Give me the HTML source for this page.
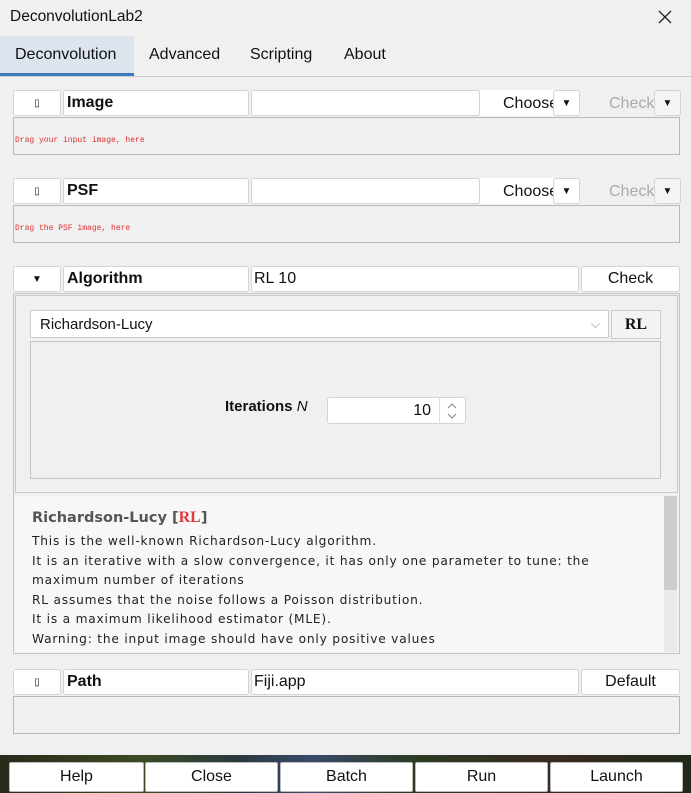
<!DOCTYPE html>
<html><head><style>
body{margin:0;width:691px;height:793px;background:#f0f0f0;font-family:"Liberation Sans",sans-serif;position:relative;overflow:hidden;font-size:15px;color:#111}
.a{position:absolute;box-sizing:border-box}
.c{background:#fff;border:1px solid #d4d4d4;border-radius:3px;display:flex;align-items:center}
.b{font-weight:bold;padding-left:3px}
.drop{background:#f0f0f0;border:1px solid #b8b8b8}
.red{color:#e03030;font-family:"Liberation Mono",monospace;font-size:8px;padding:18px 0 0 1px}
.btn{background:#fff;border:1px solid #bbb;border-radius:2px;display:flex;align-items:center;justify-content:center;font-size:15px}
</style></head><body>
<div class="a" style="left:10px;top:8px;font-size:15.5px">DeconvolutionLab2</div>
<svg class="a" style="left:658px;top:10px" width="14" height="14"><path d="M1 1L13 13M13 1L1 13" stroke="#222" stroke-width="1.3"/></svg>
<div class="a" style="left:0;top:36px;width:134px;height:40px;background:#dce5ee;border-bottom:3px solid #3d7ab8"></div>
<div class="a" style="left:0;top:76px;width:691px;height:1px;background:#ccc"></div>
<div class="a" style="left:15px;top:46px;font-size:16px">Deconvolution</div>
<div class="a" style="left:149px;top:46px;font-size:16px">Advanced</div>
<div class="a" style="left:250px;top:46px;font-size:16px">Scripting</div>
<div class="a" style="left:344px;top:46px;font-size:16px">About</div>

<!-- Image -->
<div class="a c" style="left:13px;top:90px;width:48px;height:26px;justify-content:center;font-size:10px">▯</div>
<div class="a c b" style="left:63px;top:90px;width:186px;height:26px;font-size:16px">Image</div>
<div class="a c" style="left:251px;top:90px;width:229px;height:26px"></div>
<div class="a" style="left:480px;top:90px;width:74px;height:26px;background:#fff;padding:5px 0 0 23px;font-size:16px;overflow:hidden;white-space:nowrap">Choose</div>
<div class="a c" style="left:553px;top:90px;width:27px;height:26px;justify-content:center;font-size:10px">▼</div>
<div class="a" style="left:609px;top:95px;color:#aaa;font-size:16px;width:45px;overflow:hidden">Check</div>
<div class="a c" style="left:654px;top:90px;width:27px;height:26px;justify-content:center;font-size:10px;background:#f4f4f4">▼</div>
<div class="a drop red" style="left:13px;top:117px;width:667px;height:38px">Drag your input image, here</div>

<!-- PSF -->
<div class="a c" style="left:13px;top:178px;width:48px;height:26px;justify-content:center;font-size:10px">▯</div>
<div class="a c b" style="left:63px;top:178px;width:186px;height:26px;font-size:16px">PSF</div>
<div class="a c" style="left:251px;top:178px;width:229px;height:26px"></div>
<div class="a" style="left:480px;top:178px;width:74px;height:26px;background:#fff;padding:5px 0 0 23px;font-size:16px;overflow:hidden;white-space:nowrap">Choose</div>
<div class="a c" style="left:553px;top:178px;width:27px;height:26px;justify-content:center;font-size:10px">▼</div>
<div class="a" style="left:609px;top:183px;color:#aaa;font-size:16px;width:45px;overflow:hidden">Check</div>
<div class="a c" style="left:654px;top:178px;width:27px;height:26px;justify-content:center;font-size:10px;background:#f4f4f4">▼</div>
<div class="a drop red" style="left:13px;top:205px;width:667px;height:38px">Drag the PSF image, here</div>

<!-- Algorithm -->
<div class="a c" style="left:13px;top:266px;width:48px;height:26px;justify-content:center;font-size:10px">▼</div>
<div class="a c b" style="left:63px;top:266px;width:186px;height:26px;font-size:16px">Algorithm</div>
<div class="a c" style="left:251px;top:266px;width:328px;height:26px;padding-left:2px;font-size:16px">RL 10</div>
<div class="a c" style="left:581px;top:266px;width:99px;height:26px;justify-content:center;font-size:16px">Check</div>
<div class="a" style="left:13px;top:293px;width:667px;height:361px;border:1px solid #c4c4c4"></div>
<div class="a" style="left:15px;top:295px;width:663px;height:198px;border:1px solid #c8c8c8"></div>
<div class="a c" style="left:30px;top:310px;width:579px;height:28px;border-radius:0;border-color:#ccc;padding-left:9px">Richardson-Lucy<span style="position:absolute;right:8px;color:#888;font-size:12px">⌵</span></div>
<div class="a" style="left:611px;top:310px;width:50px;height:29px;border:1px solid #ccc;background:#f3f3f3;font-family:'Liberation Serif',serif;font-weight:bold;font-size:16px;text-align:center;line-height:28px">RL</div>
<div class="a" style="left:30px;top:341px;width:631px;height:138px;border:1px solid #c4c4c4"></div>
<div class="a" style="left:225px;top:398px;font-weight:bold">Iterations <i style="font-weight:normal">N</i></div>
<div class="a c" style="left:327px;top:397px;width:139px;height:27px;padding-right:34px;justify-content:flex-end;font-size:16px">10</div>
<div class="a" style="left:439px;top:397px;width:1px;height:27px;background:#ddd"></div>
<svg class="a" style="left:445px;top:401px" width="14" height="20"><path d="M3 7L7 3L11 7M3 13L7 17L11 13" stroke="#888" fill="none"/></svg>

<!-- description -->
<div class="a" style="left:15px;top:496px;width:662px;height:156px;background:#f7f7f7"></div>
<div class="a" style="left:664px;top:496px;width:13px;height:156px;background:#eaeaea"></div>
<div class="a" style="left:664px;top:496px;width:13px;height:94px;background:#cdcdcd"></div>
<div class="a" style="left:32px;top:509px;font-family:'DejaVu Sans',sans-serif;font-weight:bold;font-size:14.5px;color:#555">Richardson-Lucy [<span style="color:#e03a3a;font-family:'Liberation Serif',serif;font-size:16px">RL</span>]</div>
<div class="a" style="left:32px;top:532px;font-family:'DejaVu Sans',sans-serif;font-size:12.2px;letter-spacing:0.8px;line-height:19.5px;color:#222;width:600px">This is the well-known Richardson-Lucy algorithm.<br>It is an iterative with a slow convergence, it has only one parameter to tune: the maximum number of iterations<br>RL assumes that the noise follows a Poisson distribution.<br>It is a maximum likelihood estimator (MLE).<br>Warning: the input image should have only positive values</div>

<!-- Path -->
<div class="a c" style="left:13px;top:669px;width:48px;height:26px;justify-content:center;font-size:10px">▯</div>
<div class="a c b" style="left:63px;top:669px;width:186px;height:26px;font-size:16px">Path</div>
<div class="a c" style="left:251px;top:669px;width:328px;height:26px;padding-left:2px;font-size:16px">Fiji.app</div>
<div class="a c" style="left:581px;top:669px;width:99px;height:26px;justify-content:center;font-size:16px">Default</div>
<div class="a drop" style="left:13px;top:696px;width:667px;height:38px"></div>

<!-- bottom -->
<div class="a" style="left:0;top:755px;width:691px;height:38px;background:linear-gradient(90deg,#2a2a1a,#3b4a22 20%,#2a3a40 35%,#3a4a6a 45%,#2b3b22 60%,#3a2a20 80%,#202a18)"></div>
<div class="a btn" style="left:9px;top:762px;width:135px;height:30px;font-size:16px">Help</div>
<div class="a btn" style="left:145px;top:762px;width:133px;height:30px;font-size:16px">Close</div>
<div class="a btn" style="left:280px;top:762px;width:133px;height:30px;font-size:16px">Batch</div>
<div class="a btn" style="left:415px;top:762px;width:133px;height:30px;font-size:16px">Run</div>
<div class="a btn" style="left:550px;top:762px;width:133px;height:30px;font-size:16px">Launch</div>
</body></html>
